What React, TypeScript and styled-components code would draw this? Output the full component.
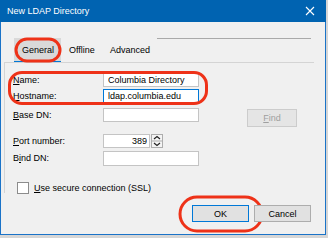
import React from 'react';
import styled, { createGlobalStyle } from 'styled-components';

const GlobalStyle = createGlobalStyle`
  html, body {
    margin: 0;
    padding: 0;
    background: #d6d6d6;
  }
  body {
    font-family: "Segoe UI", "Liberation Sans", Arial, sans-serif;
    font-size: 9px;
    color: #000;
  }
`;

const Key: React.FC<{ children: React.ReactNode }> = ({ children }) => <u>{children}</u>;

const App: React.FC = () => {
  return (
    <>
      <GlobalStyle />
      <S.Window>
        <S.TitleBar>
          <S.Title>New LDAP Directory</S.Title>
          <S.Close>
            <svg width="10" height="10" viewBox="0 0 10 10">
              <path d="M1 1 L9 9 M9 1 L1 9" stroke="#fff" strokeWidth="1.1" />
            </svg>
          </S.Close>
        </S.TitleBar>

        <S.Body>
          <S.TabStrip>
            <S.Tab $selected>
              General
              <S.Highlight $w={47} $h={25} />
            </S.Tab>
            <S.Tab>Offline</S.Tab>
            <S.Tab>Advanced</S.Tab>
            <S.TabFill />
          </S.TabStrip>

          <S.Panel>
            <S.Fields>
              <S.Label $mt={0}>
                <Key>N</Key>ame:
              </S.Label>
              <S.Input $mt={0} value="Columbia Directory" readOnly />
              <S.Spacer />

              <S.Label $mt={2}>
                <Key>H</Key>ostname:
              </S.Label>
              <S.Input $mt={2} $focused value="ldap.columbia.edu" readOnly />
              <S.Spacer />

              <S.Label $mt={5}>
                <Key>B</Key>ase DN:
              </S.Label>
              <S.Input $mt={5} value="" readOnly />
              <S.FindButton $mt={6} disabled>
                <Key>F</Key>ind
              </S.FindButton>

              <S.Label $mt={7}>
                <Key>P</Key>ort number:
              </S.Label>
              <S.PortWrap $mt={7}>
                <S.PortInput value="389" readOnly />
                <S.Spinner>
                  <svg width="12" height="14" viewBox="0 0 12 14">
                    <rect x="0.5" y="0.5" width="11" height="13" fill="#f4f4f4" stroke="#adadad" />
                    <line x1="0.5" y1="7" x2="11.5" y2="7" stroke="#adadad" />
                    <path d="M3 5 L6 2.5 L9 5" fill="none" stroke="#222" strokeWidth="1.2" />
                    <path d="M3 9 L6 11.5 L9 9" fill="none" stroke="#222" strokeWidth="1.2" />
                  </svg>
                </S.Spinner>
              </S.PortWrap>
              <S.Spacer />

              <S.Label $mt={3}>
                B<Key>i</Key>nd DN:
              </S.Label>
              <S.Input $mt={3} $tall value="" readOnly />
              <S.Spacer />
            </S.Fields>

            <S.CheckRow>
              <S.CheckBox />
              <span>
                <Key>U</Key>se secure connection (SSL)
              </span>
            </S.CheckRow>
          </S.Panel>

          <S.Buttons>
            <S.DialogButton $default>
              OK
              <S.Highlight $w={85} $h={37} />
            </S.DialogButton>
            <S.DialogButton>Cancel</S.DialogButton>
          </S.Buttons>
        </S.Body>
        <S.FieldHighlight />
      </S.Window>
    </>
  );
};

export default App;

const S = {
  Window: styled.div`
    position: relative;
    width: 326px;
    height: 235px;
    box-sizing: border-box;
    border: 1px solid #1a73c8;
    border-top: none;
    background: #f0f0f0;
    display: flex;
    flex-direction: column;
  `,
  TitleBar: styled.div`
    height: 22px;
    margin: 0 -1px;
    background: #0063b1;
    color: #fff;
    display: flex;
    align-items: center;
    justify-content: space-between;
    padding: 0 11px 0 7px;
  `,
  Title: styled.span`
    font-size: 9px;
    line-height: 22px;
  `,
  Close: styled.span`
    display: flex;
    align-items: center;
  `,
  Body: styled.div`
    flex: 1;
    display: flex;
    flex-direction: column;
    padding: 16px 14px 0 3px;
  `,
  TabStrip: styled.div`
    display: flex;
    height: 24px;
    padding-left: 10px;
  `,
  Tab: styled.div<{ $selected?: boolean }>`
    position: relative;
    display: flex;
    align-items: center;
    padding: 0 7px 0 8px;
    height: 23px;
    background: ${(p) => (p.$selected ? '#d9d9d9' : 'transparent')};
    border-bottom: 1px solid ${(p) => (p.$selected ? '#0078d7' : 'transparent')};
  `,
  TabFill: styled.div`
    flex: 1;
    border-top: 1px solid #a9a9a9;
  `,
  Highlight: styled.span<{ $w: number; $h: number }>`
    position: absolute;
    left: 50%;
    top: 50%;
    width: ${(p) => p.$w}px;
    height: ${(p) => p.$h}px;
    transform: translate(-50%, -50%);
    box-sizing: border-box;
    border: 3px solid #ee3218;
    border-radius: ${(p) => p.$h / 2}px;
    pointer-events: none;
  `,
  FieldHighlight: styled.span`
    position: absolute;
    left: 7px;
    top: 71px;
    width: 200px;
    height: 34px;
    box-sizing: border-box;
    border: 3px solid #ee3218;
    border-radius: 14px;
    pointer-events: none;
  `,
  Panel: styled.div`
    border-top: 1px solid #d4d4d4;
    border-left: 1px solid #d4d4d4;
    margin-right: -3px;
    padding: 10px 0 0 8px;
    height: 131px;
    box-sizing: border-box;
  `,
  Fields: styled.div`
    display: grid;
    grid-template-columns: 90px 96px 1fr;
    align-items: start;
  `,
  Label: styled.div<{ $mt: number }>`
    margin-top: ${(p) => p.$mt}px;
    height: 14px;
    line-height: 14px;
  `,
  Input: styled.input<{ $mt: number; $focused?: boolean; $tall?: boolean }>`
    margin: ${(p) => p.$mt}px 0 0;
    height: ${(p) => (p.$tall ? 15 : 14)}px;
    width: 96px;
    box-sizing: border-box;
    border: 1px solid ${(p) => (p.$focused ? '#0078d7' : '#c4c4c4')};
    background: #fff;
    font: inherit;
    padding: 0 4px;
    outline: none;
  `,
  Spacer: styled.div``,
  FindButton: styled.button<{ $mt: number }>`
    margin: ${(p) => p.$mt}px 0 0 48px;
    width: 50px;
    height: 18px;
    box-sizing: border-box;
    border: 1px solid #cccccc;
    background: #e5e5e5;
    color: #9f9f9f;
    font: inherit;
    padding: 0;
  `,
  PortWrap: styled.div<{ $mt: number }>`
    margin-top: ${(p) => p.$mt}px;
    display: flex;
    align-items: center;
    gap: 1px;
  `,
  PortInput: styled.input`
    height: 14px;
    width: 47px;
    box-sizing: border-box;
    border: 1px solid #c4c4c4;
    background: #fff;
    font: inherit;
    text-align: right;
    padding: 0 2px;
    outline: none;
  `,
  Spinner: styled.span`
    display: flex;
  `,
  CheckRow: styled.div`
    display: flex;
    align-items: center;
    gap: 5px;
    margin: 16px 0 0 4px;
  `,
  CheckBox: styled.span`
    width: 12px;
    height: 12px;
    box-sizing: border-box;
    border: 1px solid #8c8c8c;
    background: #fff;
  `,
  Buttons: styled.div`
    display: flex;
    justify-content: flex-end;
    gap: 5px;
    padding-top: 12px;
  `,
  DialogButton: styled.button<{ $default?: boolean }>`
    position: relative;
    width: 57px;
    height: 17px;
    box-sizing: border-box;
    border: 1px solid ${(p) => (p.$default ? '#0078d7' : '#adadad')};
    background: #e1e1e1;
    font: inherit;
    color: #000;
    padding: 0;
  `,
};
